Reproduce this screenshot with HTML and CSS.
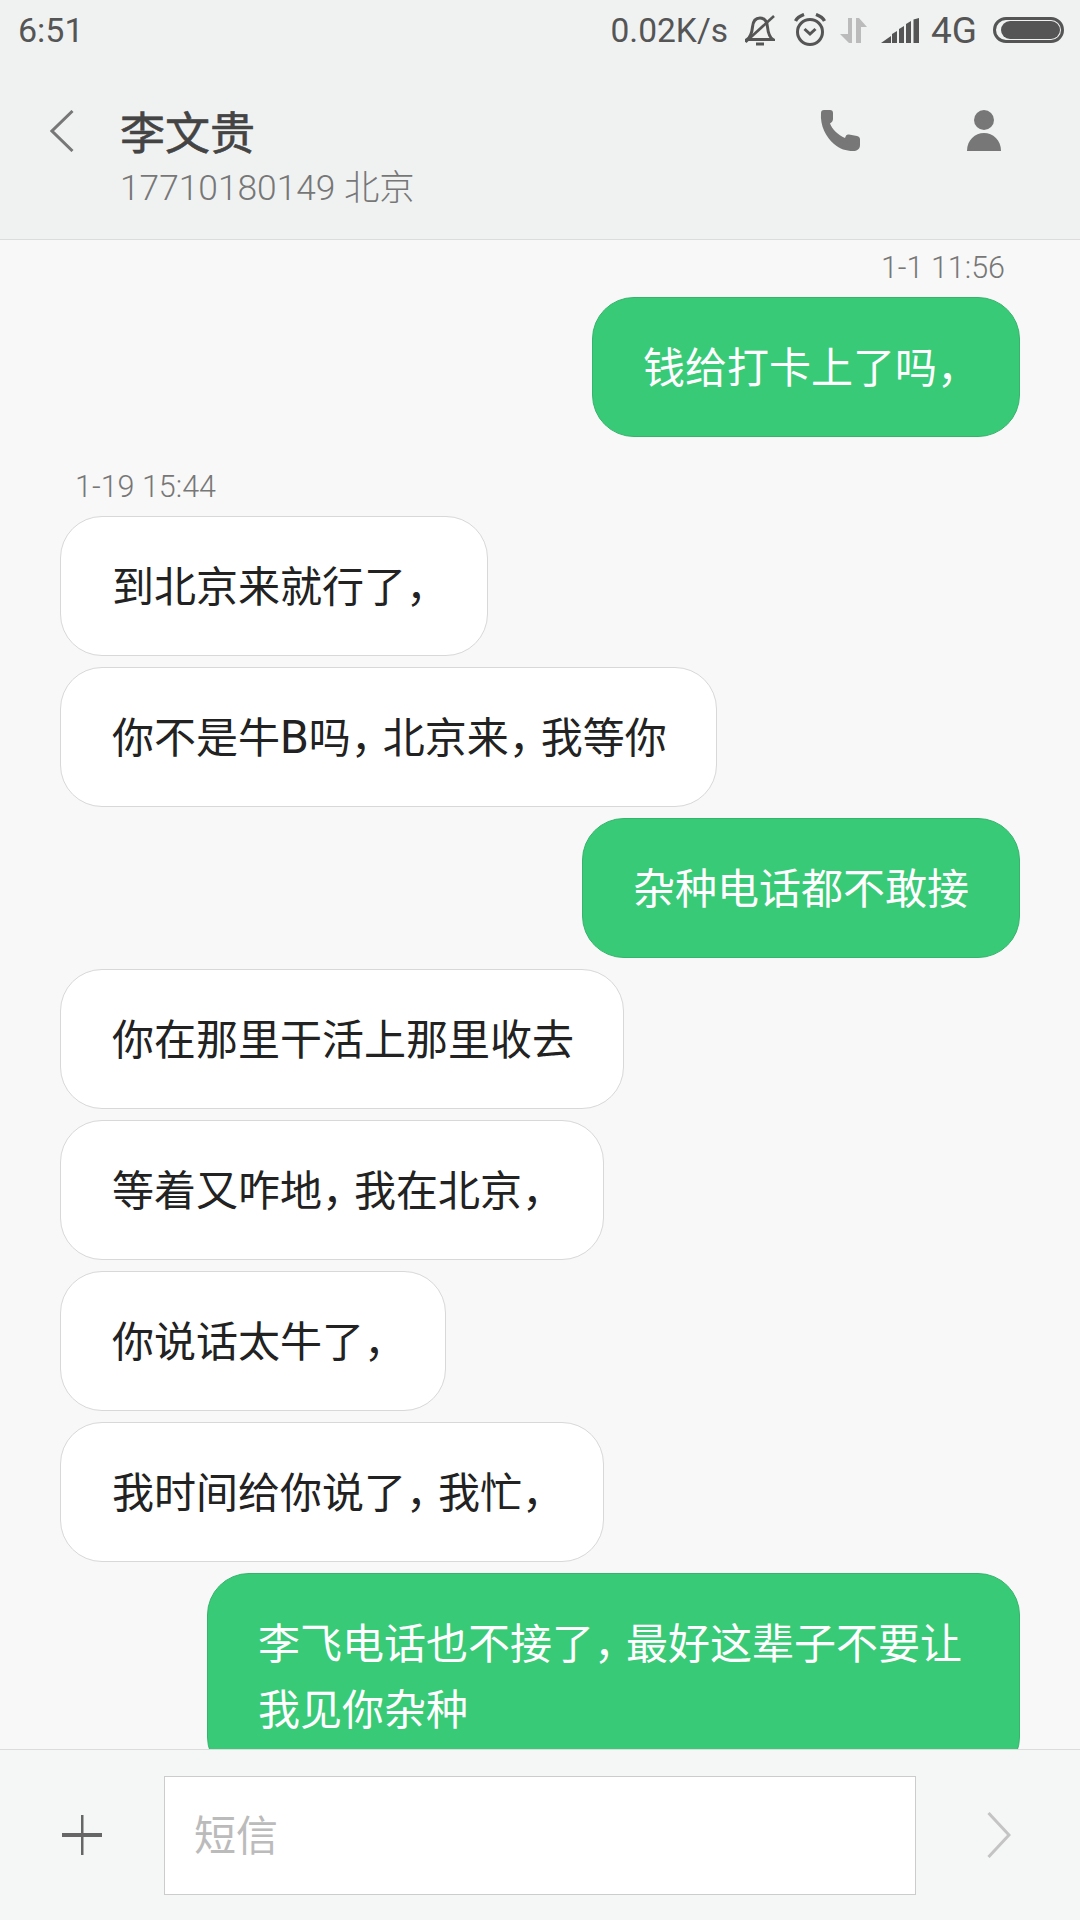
FILE: index.html
```html
<!DOCTYPE html>
<html lang="zh-CN">
<head>
  <meta charset="utf-8">
  <title>李文贵</title>
  <link rel="stylesheet" href="styles.css">
</head>
<body>
<div class="page">
  <header class="top">
    <div class="status">
      <span class="clock">6:51</span>
      <div class="status-right">
        <span class="speed">0.02K/s</span>
        <svg class="ic-bell" width="30" height="32" viewBox="0 0 30 32" fill="none" stroke="#555" stroke-width="3">
          <path d="M2 25.5 C6 23 7 18 7.5 13 C8 7 11 4 15 4 C19 4 22 7 22.5 13 C23 18 24 23 28 25.5 Z"/>
          <path d="M11 30 H19" stroke-width="3"/>
          <path d="M0.5 28 L29 2" stroke-width="2.6"/>
        </svg>
        <svg class="ic-alarm" width="32" height="34" viewBox="0 0 32 34" fill="none" stroke="#555" stroke-width="3">
          <circle cx="16" cy="19" r="12.5"/>
          <path d="M10.5 16 L16 21 L21.5 16"/>
          <path d="M1.5 8 C3 5 6 3 10 1.5" stroke-width="3.4"/>
          <path d="M30.5 8 C29 5 26 3 22 1.5" stroke-width="3.4"/>
        </svg>
        <svg class="ic-arrows" width="28" height="25" viewBox="0 0 28 25" fill="#bbb">
          <path d="M9 0 H13 V25 H10 L1 16 H9 Z"/>
          <path d="M17 0 H20 L28 9 H22 V25 H17 Z"/>
        </svg>
        <svg class="ic-signal" width="38" height="25" viewBox="0 0 38 25" fill="#555">
          <path d="M0 25 L10 18 V25 Z"/>
          <path d="M11 16 L16 13 V25 H11 Z"/>
          <path d="M18 11 L23 8 V25 H18 Z"/>
          <path d="M25 6 L30 3 V25 H25 Z"/>
          <path d="M32.5 1.5 L38 0 V25 H32.5 Z"/>
        </svg>
        <span class="net">4G</span>
        <div class="battery"><div class="battery-fill"></div></div>
      </div>
    </div>
    <div class="titlebar">
      <svg class="back" width="24" height="42" viewBox="0 0 24 42" fill="none" stroke="#777" stroke-width="3">
        <path d="M22.5 1 L2 21 L22.5 41"/>
      </svg>
      <div class="contact">
        <div class="name">李文贵</div>
        <div class="number">17710180149 北京</div>
      </div>
      <div class="actions">
        <svg width="40" height="41" viewBox="0 0 40 41" fill="#777">
          <path d="M1 3 C1 1 2 0 4 0 H10 C12 0 13 1 13 3 V9 C13 11 12 12 10 13.5 C12 19 18 25 25 28 C26 25 27 24 29 24.5 L37 26 C39 26.5 40 27.5 40 29.5 V35 C40 39 37 41 33 41 C26 41 20 39 14 34 C6 27 0 16 1 3 Z"/>
        </svg>
        <svg width="34" height="41" viewBox="0 0 34 41" fill="#777">
          <circle cx="17" cy="10" r="10"/>
          <path d="M0 41 C0 30 8 23 17 23 C26 23 34 30 34 41 Z"/>
        </svg>
      </div>
    </div>
  </header>

  <main class="thread">
    <div class="time time-out">1-1 11:56</div>
    <div class="bubble out">钱给打卡上了吗<span class="cm">，</span></div>

    <div class="time">1-19 15:44</div>
    <div class="bubble">到北京来就行了<span class="cm">，</span></div>
    <div class="bubble">你不是牛<span class="lat">B</span>吗<span class="cm">，</span>北京来<span class="cm">，</span>我等你</div>
    <div class="bubble out">杂种电话都不敢接</div>
    <div class="bubble">你在那里干活上那里收去</div>
    <div class="bubble">等着又咋地<span class="cm">，</span>我在北京<span class="cm">，</span></div>
    <div class="bubble">你说话太牛了<span class="cm">，</span></div>
    <div class="bubble">我时间给你说了<span class="cm">，</span>我忙<span class="cm">，</span></div>
    <div class="bubble out wide">李飞电话也不接了<span class="cm">，</span>最好这辈子不要让<br>我见你杂种</div>
  </main>

  <footer class="compose">
    <svg class="plus" width="40" height="40" viewBox="0 0 40 40" fill="#666">
      <rect x="0" y="18" width="40" height="4"/>
      <rect x="19" y="0" width="2.5" height="40"/>
    </svg>
    <div class="input">短信</div>
    <svg class="send" width="24" height="46" viewBox="0 0 24 46" fill="none" stroke="#c4c4c4" stroke-width="3">
      <path d="M1.5 1 L22 23 L1.5 45"/>
    </svg>
  </footer>
</div>
</body>
</html>
```

FILE: styles.css
```css
* {
  box-sizing: border-box;
}
body {
  margin: 0;
  font-family: Roboto, "Noto Sans CJK SC", sans-serif;
}
.page {
  width: 1080px;
  height: 1920px;
  display: flex;
  flex-direction: column;
  overflow: hidden;
  background-color: #f8f8f8;
}

/* header */
.top {
  height: 240px;
  flex-shrink: 0;
  background-color: #f0f2f2;
  border-bottom: 1px solid #dcdcdc;
}
.status {
  height: 60px;
  display: flex;
  justify-content: space-between;
  align-items: center;
  padding: 0 16px 0 18px;
  color: #555;
  font-size: 34px;
}
.status-right {
  display: flex;
  align-items: center;
}
.speed {
  font-size: 33.5px;
}
.ic-bell {
  margin-left: 17px;
}
.ic-alarm {
  margin-left: 19px;
}
.ic-arrows {
  margin-left: 13px;
}
.ic-signal {
  margin-left: 14px;
}
.net {
  margin-left: 12px;
  font-size: 37px;
}
.battery {
  width: 71px;
  height: 26px;
  margin-left: 16px;
  padding: 1px 1px 1px 5px;
  border: 3px solid #555;
  border-radius: 13px;
}
.battery-fill {
  width: 100%;
  height: 100%;
  background-color: #555;
  border-radius: 9px;
}
.titlebar {
  display: flex;
  align-items: flex-start;
  padding: 47px 79px 0 50px;
}
.back {
  margin-top: 3px;
  margin-right: 46px;
}
.name {
  font-size: 45px;
  line-height: 56px;
  color: #444;
  -webkit-text-stroke: 0.6px #444;
}
.number {
  font-size: 35.3px;
  line-height: 50px;
  font-weight: 300;
  color: #777;
}
.actions {
  margin-left: auto;
  margin-top: 3px;
  display: flex;
  gap: 107px;
}

/* messages */
.thread {
  flex: 1;
  min-height: 0;
  overflow: hidden;
  display: flex;
  flex-direction: column;
  align-items: flex-start;
  padding: 0 60px;
}
.time {
  margin: 19px 0 9px 15px;
  font-size: 30.5px;
  line-height: 40px;
  font-weight: 300;
  color: #777;
}
.time-out {
  margin: 8px 15px 9px 0;
  align-self: flex-end;
}
.bubble {
  flex-shrink: 0;
  margin-bottom: 11px;
  padding: 38px 49px 34px 51px;
  background-color: #fff;
  border: 1px solid #d8d8d8;
  border-radius: 42px;
  font-size: 42px;
  line-height: 66px;
  color: #222;
}
.out {
  align-self: flex-end;
  padding-left: 50px;
  padding-right: 50px;
  background-color: #38ca77;
  border-color: #34b56c;
  color: #fff;
}
.wide {
  width: 813px;
}
/* commas in the reference are narrower than a full CJK cell */
.cm {
  letter-spacing: -10px;
}
.lat {
  font-size: 46px;
  line-height: 1;
}

/* bottom bar */
.compose {
  height: 171px;
  flex-shrink: 0;
  display: flex;
  align-items: center;
  padding-left: 62px;
  background-color: #f5f6f6;
  border-top: 1px solid #dcdcdc;
}
.input {
  width: 752px;
  height: 119px;
  margin-left: 62px;
  padding-left: 29px;
  background-color: #fff;
  border: 1px solid #ccc;
  font-size: 42px;
  line-height: 119px;
  color: #bbb;
}
.send {
  margin-left: 71px;
}
```
